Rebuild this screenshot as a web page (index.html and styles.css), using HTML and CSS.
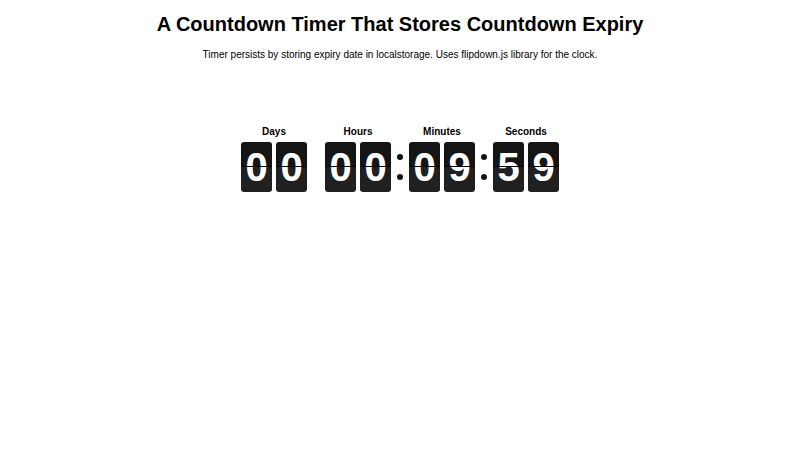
FILE: index.html
```html
<!DOCTYPE html>
<html>
<head>
<meta charset="utf-8">
<link rel="stylesheet" href="styles.css">
</head>
<body>
<h1 class="title">A Countdown Timer That Stores Countdown Expiry</h1>
<p class="subtitle">Timer persists by storing expiry date in localstorage. Uses flipdown.js library for the clock.</p>
<div class="flipdown">
  <div class="group">
    <div class="heading">Days</div>
    <div class="rotors"><div class="rotor">0<span class="line"></span></div><div class="rotor">0<span class="line"></span></div></div>
  </div>
  <div class="sep"></div>
  <div class="group">
    <div class="heading">Hours</div>
    <div class="rotors"><div class="rotor">0<span class="line"></span></div><div class="rotor">0<span class="line"></span></div></div>
  </div>
  <div class="sep colon"><span class="dot"></span><span class="dot"></span></div>
  <div class="group">
    <div class="heading">Minutes</div>
    <div class="rotors"><div class="rotor">0<span class="line"></span></div><div class="rotor">9<span class="line"></span></div></div>
  </div>
  <div class="sep colon"><span class="dot"></span><span class="dot"></span></div>
  <div class="group">
    <div class="heading">Seconds</div>
    <div class="rotors"><div class="rotor">5<span class="line"></span></div><div class="rotor">9<span class="line"></span></div></div>
  </div>
</div>
</body>
</html>
```
FILE: styles.css
```css
html, body { margin: 0; padding: 0; background: #fff; }
body { font-family: "Liberation Sans", Arial, sans-serif; color: #000; }
.title { margin: 12px 0 0; font-size: 20px; line-height: 24px; text-align: center; font-weight: bold; }
.subtitle { margin: 13px 0 0; font-size: 10px; line-height: 12px; text-align: center; }
.flipdown { display: flex; justify-content: center; margin-top: 65px; }
.group { display: flex; flex-direction: column; align-items: center; }
.heading { font-size: 10px; font-weight: bold; line-height: 12px; height: 16px; }
.rotors { display: flex; gap: 4px; }
.rotor { position: relative; width: 31px; height: 50px; border-radius: 3px; background: linear-gradient(#151515 0 50%, #202020 50% 100%); color: #fff; font-size: 40px; font-weight: bold; line-height: 50px; text-align: center; overflow: hidden; }
.line { position: absolute; left: 0; right: 0; top: 24px; height: 1px; background: #000; }
.sep { width: 18px; display: flex; flex-direction: column; justify-content: center; align-items: center; gap: 14px; padding-top: 16px; }
.dot { width: 6px; height: 6px; border-radius: 50%; background: #151515; }
```
